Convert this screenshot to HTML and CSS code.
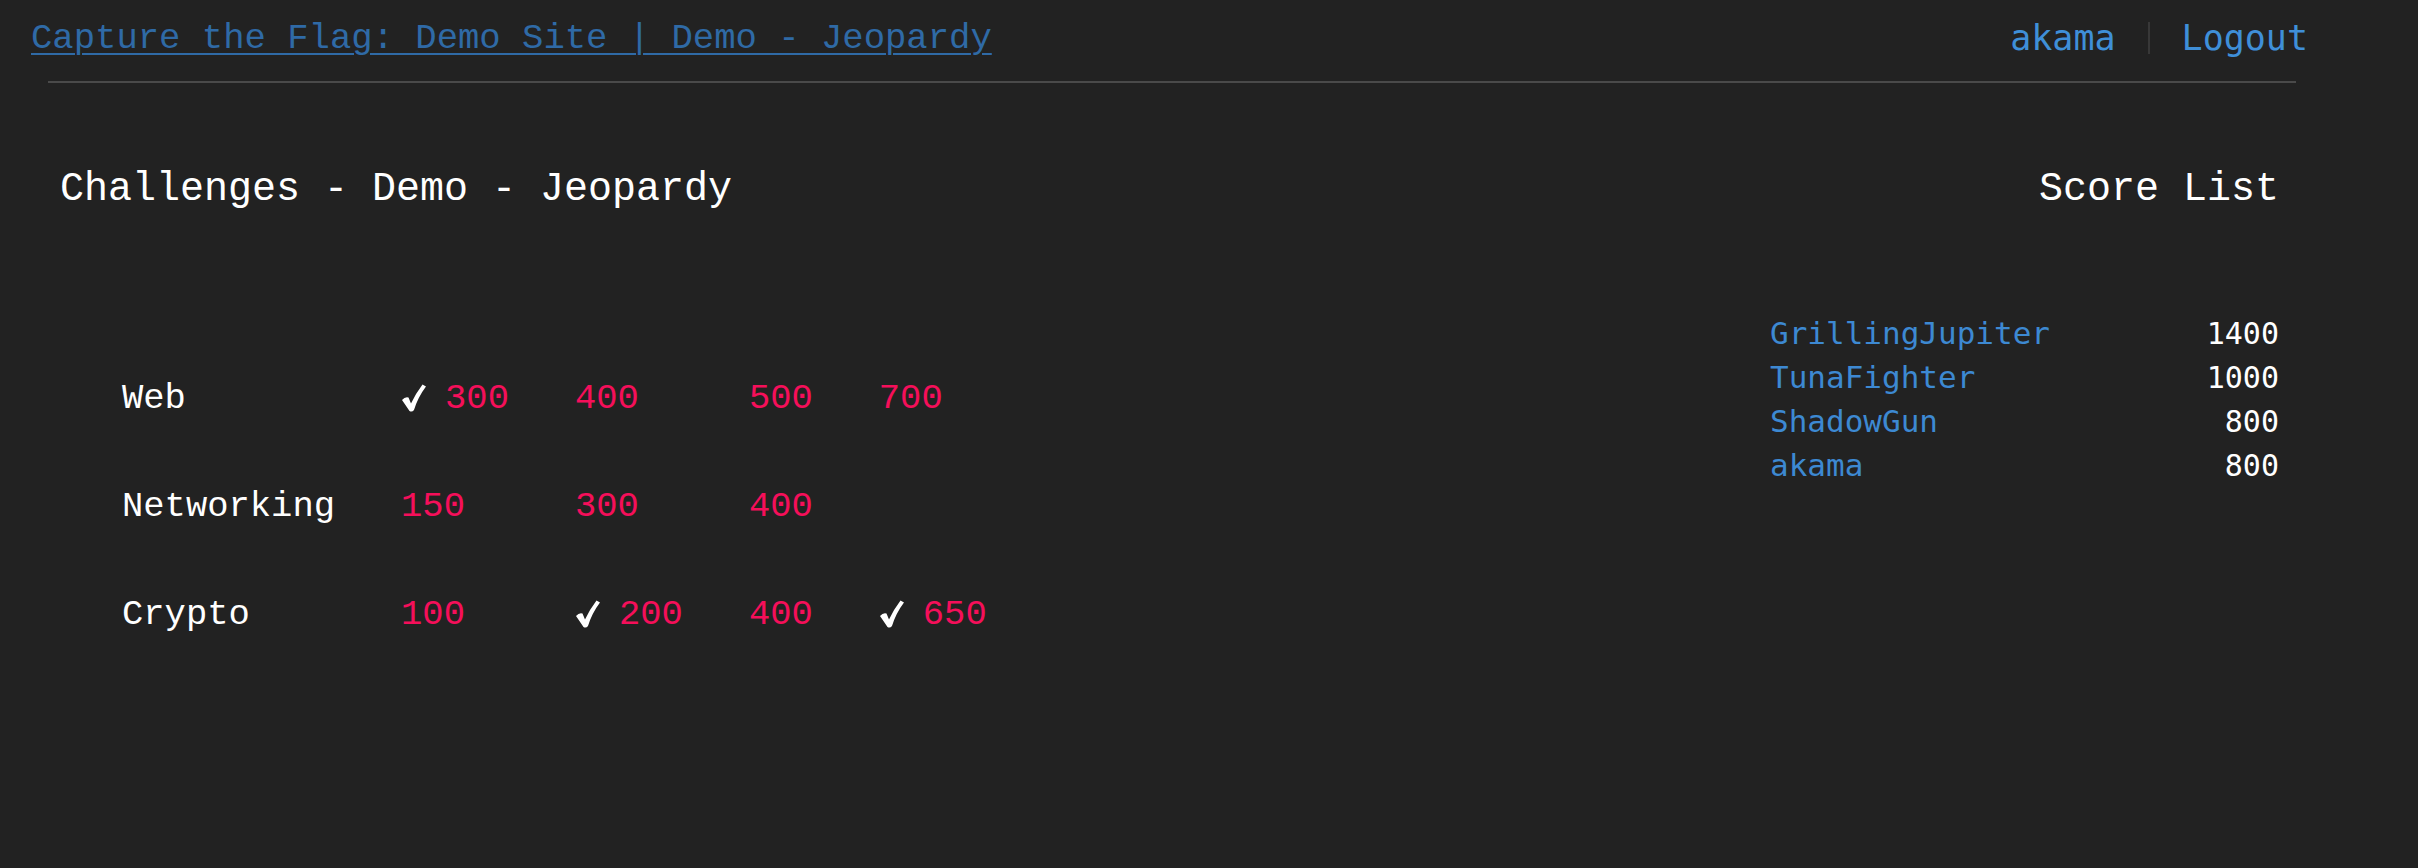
FILE: index.html
```html
<!DOCTYPE html>
<html>
<head>
<meta charset="utf-8">
<link rel="stylesheet" href="styles.css">
</head>
<body>
<header class="topbar">
  <a class="site-link" href="#">Capture the Flag: Demo Site | Demo - Jeopardy</a>
  <nav class="user-nav">
    <a href="#">akama</a>
    <span class="sep"></span>
    <a href="#">Logout</a>
  </nav>
</header>
<div class="rule"></div>
<main class="content">
  <section class="board">
    <h2 class="heading">Challenges - Demo - Jeopardy</h2>
    <div class="grid">
      <div class="cat">Web</div>
      <div class="pts"><svg class="check" viewBox="0 0 24 28"><path d="M0 16 Q3 12.5 6.5 13.5 L9 19.5 Q14 9 20.5 0.5 L24 2.5 Q16 13 12 26 Q10 28.5 7.5 27 Z"/></svg><a href="#">300</a></div>
      <div class="pts"><a href="#">400</a></div>
      <div class="pts"><a href="#">500</a></div>
      <div class="pts"><a href="#">700</a></div>

      <div class="cat">Networking</div>
      <div class="pts"><a href="#">150</a></div>
      <div class="pts"><a href="#">300</a></div>
      <div class="pts"><a href="#">400</a></div>
      <div class="pts"></div>

      <div class="cat">Crypto</div>
      <div class="pts"><a href="#">100</a></div>
      <div class="pts"><svg class="check" viewBox="0 0 24 28"><path d="M0 16 Q3 12.5 6.5 13.5 L9 19.5 Q14 9 20.5 0.5 L24 2.5 Q16 13 12 26 Q10 28.5 7.5 27 Z"/></svg><a href="#">200</a></div>
      <div class="pts"><a href="#">400</a></div>
      <div class="pts"><svg class="check" viewBox="0 0 24 28"><path d="M0 16 Q3 12.5 6.5 13.5 L9 19.5 Q14 9 20.5 0.5 L24 2.5 Q16 13 12 26 Q10 28.5 7.5 27 Z"/></svg><a href="#">650</a></div>
    </div>
  </section>
  <aside class="scores">
    <h2 class="heading right">Score List</h2>
    <ul class="score-list">
      <li><a href="#">GrillingJupiter</a><span>1400</span></li>
      <li><a href="#">TunaFighter</a><span>1000</span></li>
      <li><a href="#">ShadowGun</a><span>800</span></li>
      <li><a href="#">akama</a><span>800</span></li>
    </ul>
  </aside>
</main>
</body>
</html>
```

FILE: styles.css
```css
html, body {
  margin: 0;
  padding: 0;
  background: #222222;
  color: #ffffff;
  height: 100%;
}
body {
  font-family: "Liberation Mono", "DejaVu Sans Mono", monospace;
}
a { text-decoration: none; }

.topbar {
  display: flex;
  justify-content: space-between;
  align-items: center;
  height: 76px;
  padding: 0 110px 0 31px;
}
.site-link {
  font-family: "Liberation Mono", monospace;
  font-size: 35.6px;
  color: #2f6aa6;
  text-decoration: underline;
  text-underline-offset: 5px;
  text-decoration-thickness: 2px;
}
.user-nav {
  display: flex;
  align-items: center;
  gap: 32px;
}
.user-nav a {
  font-family: "DejaVu Sans Mono", monospace;
  font-size: 35px;
  color: #3f8fd8;
}
.sep {
  width: 2px;
  height: 32px;
  background: #383838;
}
.rule {
  margin: 5px 122px 0 48px;
  border-top: 2px solid #4a4a4a;
}

.content {
  display: flex;
  justify-content: space-between;
  padding: 0 139px 0 60px;
}
.heading {
  margin: 83px 0 0;
  font-weight: normal;
  font-size: 40px;
  line-height: 48px;
  color: #ffffff;
}
.heading.right { text-align: right; }

.grid {
  display: grid;
  grid-template-columns: repeat(5, auto);
  justify-content: start;
  margin: 130px 0 0 62px;
  font-size: 35.5px;
}
.grid > div {
  height: 108px;
  display: flex;
  align-items: center;
  padding-right: 66px;
}
.cat { color: #ffffff; }
.pts a { color: #f50f5a; }
.check {
  width: 24px;
  height: 28px;
  fill: #ffffff;
  margin: 0 19px 0 1px;
}

.scores { width: 509px; }
.score-list {
  list-style: none;
  margin: 97px 0 0;
  padding: 0;
}
.score-list li {
  display: flex;
  justify-content: space-between;
  height: 44px;
  align-items: center;
  font-family: "DejaVu Sans Mono", monospace;
  font-size: 30px;
}
.score-list a { color: #3d89d2; font-size: 31px; }
.score-list span { color: #ffffff; }
```
